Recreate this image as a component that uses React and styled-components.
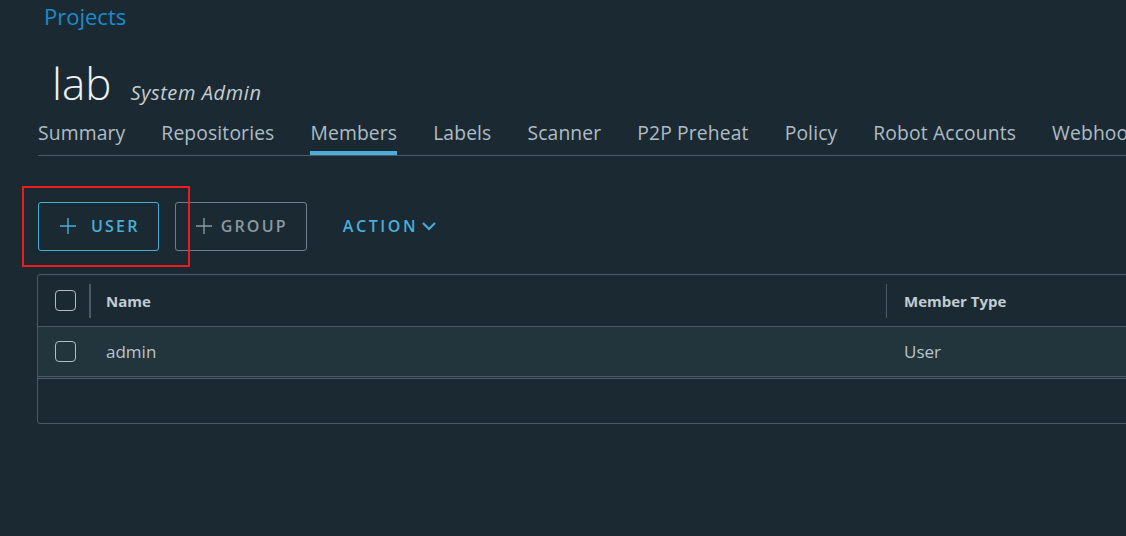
import React from 'react'
import styled, { createGlobalStyle } from 'styled-components'

const GlobalStyle = createGlobalStyle`
  html, body {
    margin: 0;
    padding: 0;
    background: #1b2a32;
    font-family: 'Open Sans', 'Noto Sans', sans-serif;
    overflow: hidden;
  }
`

const tabs = ['Summary', 'Repositories', 'Members', 'Labels', 'Scanner', 'P2P Preheat', 'Policy', 'Robot Accounts', 'Webhooks']

class App extends React.Component {
  render() {
    return (
      <Page>
        <GlobalStyle />
        <Crumb>Projects</Crumb>
        <TitleRow>
          <Title>lab</Title>
          <Role>System Admin</Role>
        </TitleRow>
        <TabBar>
          {tabs.map(t => (
            <Tab key={t} active={t === 'Members'}>{t}</Tab>
          ))}
        </TabBar>
        <Toolbar>
          <Highlight />
          <OutlineButton primary>
            <Plus />
            <span>USER</span>
          </OutlineButton>
          <OutlineButton>
            <Plus />
            <span>GROUP</span>
          </OutlineButton>
          <LinkButton>
            ACTION
            <svg width="16" height="16" viewBox="0 0 16 16">
              <path d="M2 5 L8 11 L14 5" fill="none" stroke="#49afd9" strokeWidth="2" />
            </svg>
          </LinkButton>
        </Toolbar>
        <Grid>
          <HeadRow>
            <CheckCell><Check /><Divider /></CheckCell>
            <Cell bold>Name</Cell>
            <Cell bold divided>Member Type</Cell>
          </HeadRow>
          <BodyRow>
            <CheckCell><Check /></CheckCell>
            <Cell>admin</Cell>
            <Cell indent>User</Cell>
          </BodyRow>
          <Footer />
        </Grid>
      </Page>
    )
  }
}

export default App

const Plus = () => (
  <svg width="18" height="18" viewBox="0 0 18 18">
    <path d="M9 1 V17 M1 9 H17" stroke="currentColor" strokeWidth="1.4" fill="none" />
  </svg>
)

const Page = styled.div`
  width: 1126px;
  height: 536px;
  overflow: hidden;
  padding: 3px 0 0 38px;
  box-sizing: border-box;
`

const Crumb = styled.div`
  color: #1a8ccd;
  font-size: 22px;
  line-height: 26px;
  margin-left: 6px;
`

const TitleRow = styled.div`
  display: flex;
  align-items: baseline;
  margin: 26px 0 0 14px;
  height: 56px;
`

const Title = styled.div`
  color: #eef1f3;
  font-size: 44px;
  line-height: 56px;
  font-weight: 300;
`

const Role = styled.div`
  color: #c4cdd3;
  font-size: 20px;
  font-style: italic;
  letter-spacing: 0.6px;
  margin-left: 19px;
`

const TabBar = styled.div`
  display: flex;
  gap: 36px;
  margin-top: 4px;
  border-bottom: 1px solid #4b5b66;
  white-space: nowrap;
  height: 40px;
`

const Tab = styled.div`
  color: #aebcc5;
  font-size: 19.3px;
  letter-spacing: 0.14px;
  line-height: 36px;
  border-bottom: 4px solid ${p => (p.active ? '#49afd9' : 'transparent')};
`

const Toolbar = styled.div`
  position: relative;
  display: flex;
  align-items: center;
  gap: 16px;
  margin-top: 45px;
  height: 50px;
`

const Highlight = styled.div`
  position: absolute;
  left: -16px;
  top: -15px;
  width: 168px;
  height: 81px;
  border: 2px solid #ee1c1c;
  box-sizing: border-box;
`

const OutlineButton = styled.button`
  display: flex;
  align-items: center;
  gap: ${p => (p.primary ? '14px' : '8px')};
  height: 49px;
  padding: ${p => (p.primary ? '0 18px 0 20px' : '0 18px 0 19px')};
  background: transparent;
  border: 1px solid ${p => (p.primary ? '#49afd9' : '#6f7e88')};
  border-radius: 3px;
  color: ${p => (p.primary ? '#49afd9' : '#8a98a1')};
  font-family: inherit;
  font-size: 16px;
  font-weight: 600;
  letter-spacing: 2.2px;
`

const LinkButton = styled.div`
  display: flex;
  align-items: center;
  gap: 3px;
  margin-left: 20px;
  color: #49afd9;
  font-size: 16px;
  font-weight: 600;
  letter-spacing: 2.6px;
`

const Grid = styled.div`
  margin-top: 23px;
  margin-left: -1px;
  width: 1120px;
  border: 1px solid #4b5b66;
  border-radius: 3px;
`

const HeadRow = styled.div`
  display: grid;
  grid-template-columns: 68px 780px 1fr;
  align-items: center;
  height: 51px;
  border-bottom: 1px solid #4b5b66;
`

const BodyRow = styled.div`
  display: grid;
  grid-template-columns: 68px 780px 1fr;
  align-items: center;
  height: 49px;
  background: #22343c;
  border-bottom: 3px double #4b5b66;
`

const CheckCell = styled.div`
  display: flex;
  align-items: center;
  height: 100%;
  padding-left: 17px;
  box-sizing: border-box;
`

const Check = styled.div`
  width: 21px;
  height: 21px;
  border: 1px solid #b2bcc2;
  border-radius: 4px;
  box-sizing: border-box;
`

const Divider = styled.div`
  width: 2px;
  height: 34px;
  background: #4b5b66;
  margin-left: 13px;
`

const Cell = styled.div`
  display: flex;
  align-items: center;
  height: ${p => (p.divided ? '34px' : 'auto')};
  color: ${p => (p.bold ? '#c2ccd2' : '#b9c5cc')};
  font-size: ${p => (p.bold ? '15px' : '17px')};
  font-weight: ${p => (p.bold ? 700 : 400)};
  border-left: ${p => (p.divided ? '1px solid #4b5b66' : 'none')};
  padding-left: ${p => (p.divided ? '17px' : p.indent ? '18px' : '0')};
`

const Footer = styled.div`
  height: 44px;
`
